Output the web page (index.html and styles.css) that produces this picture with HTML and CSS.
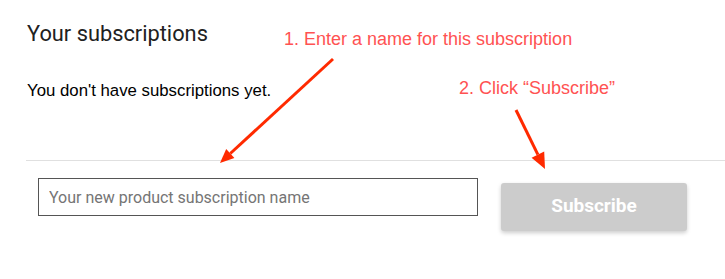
FILE: index.html
```html
<!DOCTYPE html>
<html lang="en">
<head>
  <meta charset="UTF-8" />
  <title>Your subscriptions</title>
  <link rel="stylesheet" href="styles.css">
</head>
<body>

  <!-- subscriptions list -->
  <section class="subs">
    <h2 class="subs-title">Your subscriptions</h2>
    <p class="subs-empty">You don't have subscriptions yet.</p>
  </section>

  <hr class="divider">

  <!-- new subscription form -->
  <form class="subs-form" onsubmit="return false;">
    <input class="subs-input" type="text" placeholder="Your new product subscription name">
    <button class="subs-btn" type="submit" disabled>Subscribe</button>
  </form>

  <!-- annotations over the page -->
  <div class="note note-1">1. Enter a name for this subscription</div>
  <div class="note note-2">2. Click “Subscribe”</div>
  <svg class="arrows" width="725" height="279" viewBox="0 0 725 279">
    <line x1="333" y1="59" x2="230.3" y2="153.5" />
    <polygon points="220,163 234.4,157.9 226.2,149.1" />
    <line x1="516" y1="110" x2="537.9" y2="154.6" />
    <polygon points="545,169 544.2,151.5 531.6,157.7" />
  </svg>

</body>
</html>
```

FILE: styles.css
```css
body {
  margin: 0;
  background: #fff;
  font-family: 'Liberation Sans', Arial, sans-serif;
  position: relative;
  min-height: 279px;
}

.subs {
  padding: 21px 0 0 27px;
}

.subs-title {
  margin: 0;
  font-family: Roboto, sans-serif;
  font-size: 21.8px;
  font-weight: 400;
  line-height: 26px;
  color: #212121;
}

.subs-empty {
  margin: 34px 0 0;
  font-size: 16.8px;
  line-height: 20px;
  color: #000;
}

.divider {
  margin: 59px 0 0 26px;
  border: none;
  border-top: 1px solid #e0e0e0;
  height: 0;
}

.subs-form {
  display: flex;
  align-items: flex-start;
  gap: 23px;
  padding: 17px 0 0 38px;
  margin: 0;
}

.subs-input {
  box-sizing: border-box;
  width: 440px;
  height: 38px;
  margin: 0;
  padding: 0 10px;
  border: 1px solid #555;
  border-radius: 0;
  font-family: Roboto, sans-serif;
  font-size: 16px;
  color: #212121;
  outline: none;
}

.subs-input::placeholder {
  color: #757575;
}

.subs-btn {
  width: 186px;
  height: 48px;
  margin-top: 5px;
  padding: 0 0 4px;
  border: none;
  border-radius: 3px;
  background: #cccccc;
  color: #fff;
  font-family: Roboto, sans-serif;
  font-size: 19px;
  font-weight: 700;
  box-shadow: 0 2px 4px rgba(0, 0, 0, 0.2);
}

.note {
  position: absolute;
  font-size: 18px;
  line-height: 21px;
  color: #ff5252;
  white-space: nowrap;
}

.note-1 {
  left: 284px;
  top: 29px;
}

.note-2 {
  left: 459px;
  top: 78px;
}

.arrows {
  position: absolute;
  left: 0;
  top: 0;
  pointer-events: none;
}

.arrows line {
  stroke: #ff2a00;
  stroke-width: 3;
}

.arrows polygon {
  fill: #ff2a00;
}
```
